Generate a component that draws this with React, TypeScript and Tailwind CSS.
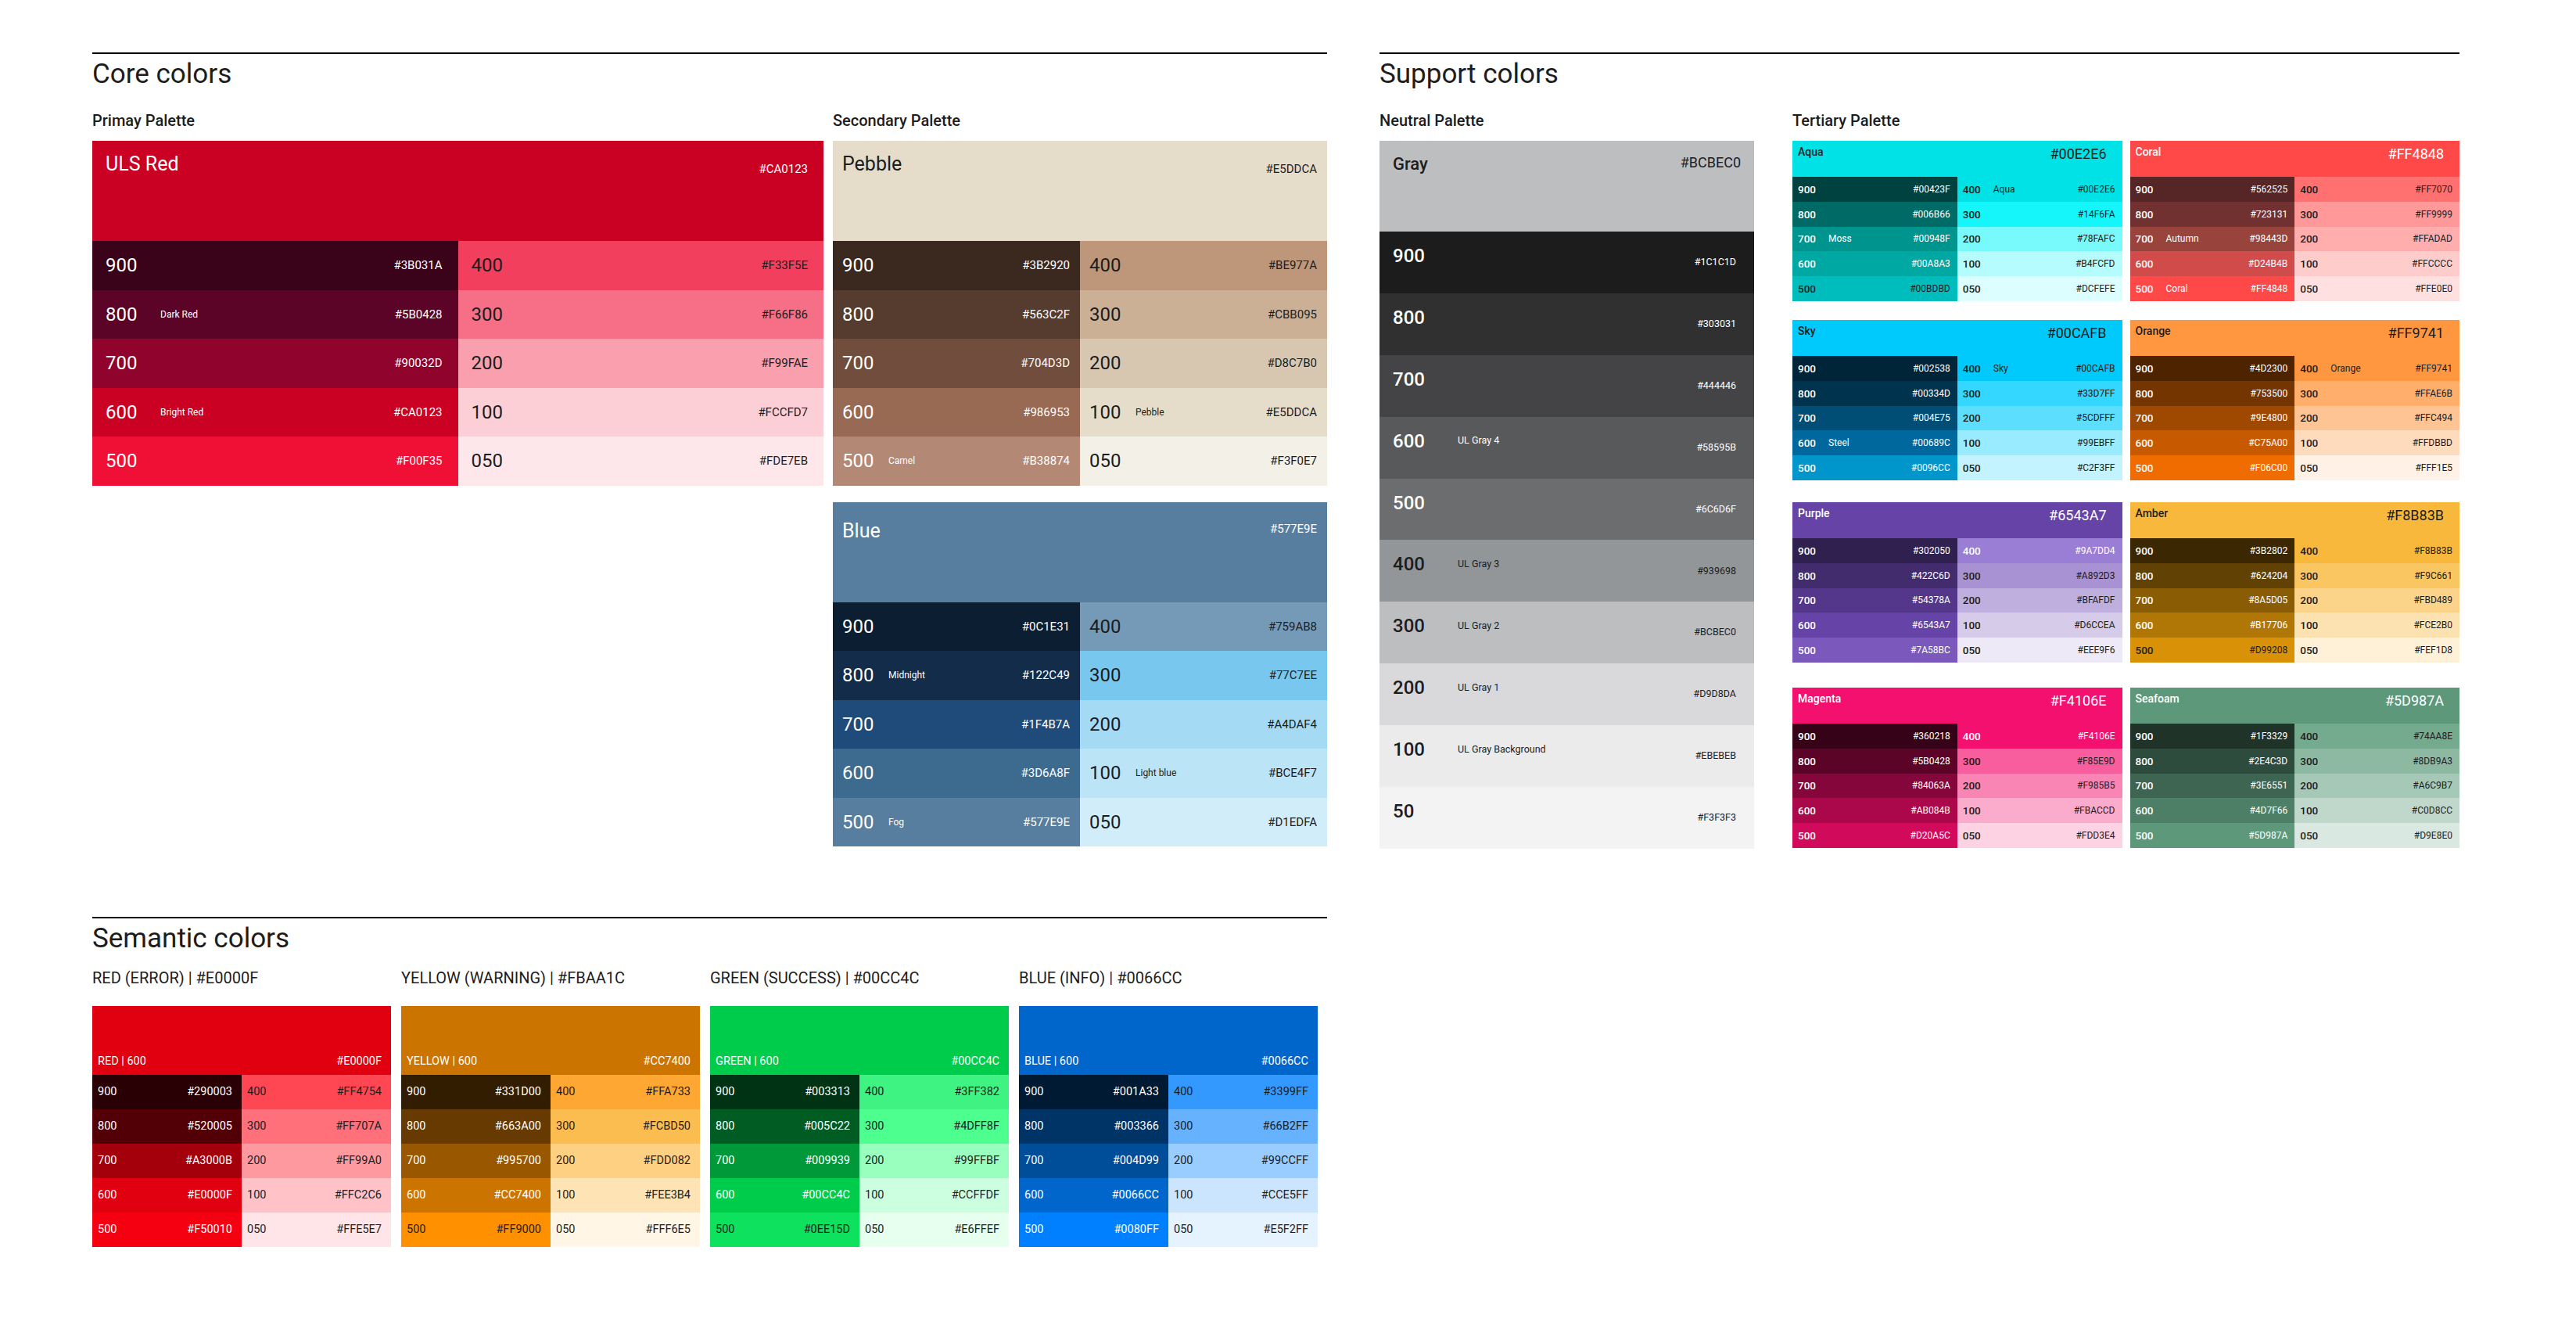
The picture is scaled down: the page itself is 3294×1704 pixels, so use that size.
import React from "react";

type Swatch = { n: string; hex: string; bg: string; name?: string; d?: boolean };
type Palette = {
  title: string;
  hex: string;
  bg: string;
  dark?: boolean;
  left: Swatch[];
  right: Swatch[];
};

const DARK = "text-[#1d1d1d]";
const LIGHT = "text-white";

// ---- Core ----
const PRIMARY: Palette = {
  title: "ULS Red", hex: "#CA0123", bg: "bg-[#CA0123]",
  left: [
    { n: "900", hex: "#3B031A", bg: "bg-[#3B031A]" },
    { n: "800", hex: "#5B0428", bg: "bg-[#5B0428]", name: "Dark Red" },
    { n: "700", hex: "#90032D", bg: "bg-[#90032D]" },
    { n: "600", hex: "#CA0123", bg: "bg-[#CA0123]", name: "Bright Red" },
    { n: "500", hex: "#F00F35", bg: "bg-[#F00F35]" },
  ],
  right: [
    { n: "400", hex: "#F33F5E", bg: "bg-[#F33F5E]" },
    { n: "300", hex: "#F66F86", bg: "bg-[#F66F86]" },
    { n: "200", hex: "#F99FAE", bg: "bg-[#F99FAE]" },
    { n: "100", hex: "#FCCFD7", bg: "bg-[#FCCFD7]" },
    { n: "050", hex: "#FDE7EB", bg: "bg-[#FDE7EB]" },
  ],
};

const PEBBLE: Palette = {
  title: "Pebble", hex: "#E5DDCA", bg: "bg-[#E5DDCA]", dark: true,
  left: [
    { n: "900", hex: "#3B2920", bg: "bg-[#3B2920]" },
    { n: "800", hex: "#563C2F", bg: "bg-[#563C2F]" },
    { n: "700", hex: "#704D3D", bg: "bg-[#704D3D]" },
    { n: "600", hex: "#986953", bg: "bg-[#986953]" },
    { n: "500", hex: "#B38874", bg: "bg-[#B38874]", name: "Camel" },
  ],
  right: [
    { n: "400", hex: "#BE977A", bg: "bg-[#BE977A]" },
    { n: "300", hex: "#CBB095", bg: "bg-[#CBB095]" },
    { n: "200", hex: "#D8C7B0", bg: "bg-[#D8C7B0]" },
    { n: "100", hex: "#E5DDCA", bg: "bg-[#E5DDCA]", name: "Pebble" },
    { n: "050", hex: "#F3F0E7", bg: "bg-[#F3F0E7]" },
  ],
};

const BLUE: Palette = {
  title: "Blue", hex: "#577E9E", bg: "bg-[#577E9E]",
  left: [
    { n: "900", hex: "#0C1E31", bg: "bg-[#0C1E31]" },
    { n: "800", hex: "#122C49", bg: "bg-[#122C49]", name: "Midnight" },
    { n: "700", hex: "#1F4B7A", bg: "bg-[#1F4B7A]" },
    { n: "600", hex: "#3D6A8F", bg: "bg-[#3D6A8F]" },
    { n: "500", hex: "#577E9E", bg: "bg-[#577E9E]", name: "Fog" },
  ],
  right: [
    { n: "400", hex: "#759AB8", bg: "bg-[#759AB8]" },
    { n: "300", hex: "#77C7EE", bg: "bg-[#77C7EE]" },
    { n: "200", hex: "#A4DAF4", bg: "bg-[#A4DAF4]" },
    { n: "100", hex: "#BCE4F7", bg: "bg-[#BCE4F7]", name: "Light blue" },
    { n: "050", hex: "#D1EDFA", bg: "bg-[#D1EDFA]" },
  ],
};

// ---- Neutral ----
const GRAYS: Swatch[] = [
  { n: "900", hex: "#1C1C1D", bg: "bg-[#1C1C1D]" },
  { n: "800", hex: "#303031", bg: "bg-[#303031]" },
  { n: "700", hex: "#444446", bg: "bg-[#444446]" },
  { n: "600", hex: "#58595B", bg: "bg-[#58595B]", name: "UL Gray 4" },
  { n: "500", hex: "#6C6D6F", bg: "bg-[#6C6D6F]" },
  { n: "400", hex: "#939698", bg: "bg-[#939698]", name: "UL Gray 3", d: true },
  { n: "300", hex: "#BCBEC0", bg: "bg-[#BCBEC0]", name: "UL Gray 2", d: true },
  { n: "200", hex: "#D9D8DA", bg: "bg-[#D9D8DA]", name: "UL Gray 1", d: true },
  { n: "100", hex: "#EBEBEB", bg: "bg-[#EBEBEB]", name: "UL Gray Background", d: true },
  { n: "50", hex: "#F3F3F3", bg: "bg-[#F3F3F3]", d: true },
];

// ---- Tertiary (pairs, one per row) ----
const TERTIARY: Palette[][] = [
  [
    {
      title: "Aqua", hex: "#00E2E6", bg: "bg-[#00E2E6]", dark: true,
      left: [
        { n: "900", hex: "#00423F", bg: "bg-[#00423F]" },
        { n: "800", hex: "#006B66", bg: "bg-[#006B66]" },
        { n: "700", hex: "#00948F", bg: "bg-[#00948F]", name: "Moss" },
        { n: "600", hex: "#00A8A3", bg: "bg-[#00A8A3]" },
        { n: "500", hex: "#00BDBD", bg: "bg-[#00BDBD]", d: true },
      ],
      right: [
        { n: "400", hex: "#00E2E6", bg: "bg-[#00E2E6]", name: "Aqua" },
        { n: "300", hex: "#14F6FA", bg: "bg-[#14F6FA]" },
        { n: "200", hex: "#78FAFC", bg: "bg-[#78FAFC]" },
        { n: "100", hex: "#B4FCFD", bg: "bg-[#B4FCFD]" },
        { n: "050", hex: "#DCFEFE", bg: "bg-[#DCFEFE]" },
      ],
    },
    {
      title: "Coral", hex: "#FF4848", bg: "bg-[#FF4848]",
      left: [
        { n: "900", hex: "#562525", bg: "bg-[#562525]" },
        { n: "800", hex: "#723131", bg: "bg-[#723131]" },
        { n: "700", hex: "#98443D", bg: "bg-[#98443D]", name: "Autumn" },
        { n: "600", hex: "#D24B4B", bg: "bg-[#D24B4B]" },
        { n: "500", hex: "#FF4848", bg: "bg-[#FF4848]", name: "Coral" },
      ],
      right: [
        { n: "400", hex: "#FF7070", bg: "bg-[#FF7070]" },
        { n: "300", hex: "#FF9999", bg: "bg-[#FF9999]" },
        { n: "200", hex: "#FFADAD", bg: "bg-[#FFADAD]" },
        { n: "100", hex: "#FFCCCC", bg: "bg-[#FFCCCC]" },
        { n: "050", hex: "#FFE0E0", bg: "bg-[#FFE0E0]" },
      ],
    },
  ],
  [
    {
      title: "Sky", hex: "#00CAFB", bg: "bg-[#00CAFB]", dark: true,
      left: [
        { n: "900", hex: "#002538", bg: "bg-[#002538]" },
        { n: "800", hex: "#00334D", bg: "bg-[#00334D]" },
        { n: "700", hex: "#004E75", bg: "bg-[#004E75]" },
        { n: "600", hex: "#00689C", bg: "bg-[#00689C]", name: "Steel" },
        { n: "500", hex: "#0096CC", bg: "bg-[#0096CC]" },
      ],
      right: [
        { n: "400", hex: "#00CAFB", bg: "bg-[#00CAFB]", name: "Sky" },
        { n: "300", hex: "#33D7FF", bg: "bg-[#33D7FF]" },
        { n: "200", hex: "#5CDFFF", bg: "bg-[#5CDFFF]" },
        { n: "100", hex: "#99EBFF", bg: "bg-[#99EBFF]" },
        { n: "050", hex: "#C2F3FF", bg: "bg-[#C2F3FF]" },
      ],
    },
    {
      title: "Orange", hex: "#FF9741", bg: "bg-[#FF9741]", dark: true,
      left: [
        { n: "900", hex: "#4D2300", bg: "bg-[#4D2300]" },
        { n: "800", hex: "#753500", bg: "bg-[#753500]" },
        { n: "700", hex: "#9E4800", bg: "bg-[#9E4800]" },
        { n: "600", hex: "#C75A00", bg: "bg-[#C75A00]" },
        { n: "500", hex: "#F06C00", bg: "bg-[#F06C00]" },
      ],
      right: [
        { n: "400", hex: "#FF9741", bg: "bg-[#FF9741]", name: "Orange" },
        { n: "300", hex: "#FFAE6B", bg: "bg-[#FFAE6B]" },
        { n: "200", hex: "#FFC494", bg: "bg-[#FFC494]" },
        { n: "100", hex: "#FFDBBD", bg: "bg-[#FFDBBD]" },
        { n: "050", hex: "#FFF1E5", bg: "bg-[#FFF1E5]" },
      ],
    },
  ],
  [
    {
      title: "Purple", hex: "#6543A7", bg: "bg-[#6543A7]",
      left: [
        { n: "900", hex: "#302050", bg: "bg-[#302050]" },
        { n: "800", hex: "#422C6D", bg: "bg-[#422C6D]" },
        { n: "700", hex: "#54378A", bg: "bg-[#54378A]" },
        { n: "600", hex: "#6543A7", bg: "bg-[#6543A7]" },
        { n: "500", hex: "#7A58BC", bg: "bg-[#7A58BC]" },
      ],
      right: [
        { n: "400", hex: "#9A7DD4", bg: "bg-[#9A7DD4]", d: false },
        { n: "300", hex: "#A892D3", bg: "bg-[#A892D3]" },
        { n: "200", hex: "#BFAFDF", bg: "bg-[#BFAFDF]" },
        { n: "100", hex: "#D6CCEA", bg: "bg-[#D6CCEA]" },
        { n: "050", hex: "#EEE9F6", bg: "bg-[#EEE9F6]" },
      ],
    },
    {
      title: "Amber", hex: "#F8B83B", bg: "bg-[#F8B83B]", dark: true,
      left: [
        { n: "900", hex: "#3B2802", bg: "bg-[#3B2802]" },
        { n: "800", hex: "#624204", bg: "bg-[#624204]" },
        { n: "700", hex: "#8A5D05", bg: "bg-[#8A5D05]" },
        { n: "600", hex: "#B17706", bg: "bg-[#B17706]" },
        { n: "500", hex: "#D99208", bg: "bg-[#D99208]", d: true },
      ],
      right: [
        { n: "400", hex: "#F8B83B", bg: "bg-[#F8B83B]" },
        { n: "300", hex: "#F9C661", bg: "bg-[#F9C661]" },
        { n: "200", hex: "#FBD489", bg: "bg-[#FBD489]" },
        { n: "100", hex: "#FCE2B0", bg: "bg-[#FCE2B0]" },
        { n: "050", hex: "#FEF1D8", bg: "bg-[#FEF1D8]" },
      ],
    },
  ],
  [
    {
      title: "Magenta", hex: "#F4106E", bg: "bg-[#F4106E]",
      left: [
        { n: "900", hex: "#360218", bg: "bg-[#360218]" },
        { n: "800", hex: "#5B0428", bg: "bg-[#5B0428]" },
        { n: "700", hex: "#84063A", bg: "bg-[#84063A]" },
        { n: "600", hex: "#AB084B", bg: "bg-[#AB084B]" },
        { n: "500", hex: "#D20A5C", bg: "bg-[#D20A5C]" },
      ],
      right: [
        { n: "400", hex: "#F4106E", bg: "bg-[#F4106E]", d: false },
        { n: "300", hex: "#F85E9D", bg: "bg-[#F85E9D]" },
        { n: "200", hex: "#F985B5", bg: "bg-[#F985B5]" },
        { n: "100", hex: "#FBACCD", bg: "bg-[#FBACCD]" },
        { n: "050", hex: "#FDD3E4", bg: "bg-[#FDD3E4]" },
      ],
    },
    {
      title: "Seafoam", hex: "#5D987A", bg: "bg-[#5D987A]",
      left: [
        { n: "900", hex: "#1F3329", bg: "bg-[#1F3329]" },
        { n: "800", hex: "#2E4C3D", bg: "bg-[#2E4C3D]" },
        { n: "700", hex: "#3E6551", bg: "bg-[#3E6551]" },
        { n: "600", hex: "#4D7F66", bg: "bg-[#4D7F66]" },
        { n: "500", hex: "#5D987A", bg: "bg-[#5D987A]" },
      ],
      right: [
        { n: "400", hex: "#74AA8E", bg: "bg-[#74AA8E]" },
        { n: "300", hex: "#8DB9A3", bg: "bg-[#8DB9A3]" },
        { n: "200", hex: "#A6C9B7", bg: "bg-[#A6C9B7]" },
        { n: "100", hex: "#C0D8CC", bg: "bg-[#C0D8CC]" },
        { n: "050", hex: "#D9E8E0", bg: "bg-[#D9E8E0]" },
      ],
    },
  ],
];

// spacing above each tertiary row, as measured
const TERT_GAPS = ["mt-[14px]", "mt-[24px]", "mt-[28px]", "mt-[32px]"];

// ---- Semantic ----
const SEMANTIC: (Palette & { label: string })[] = [
  {
    label: "RED (ERROR) | #E0000F", title: "RED | 600", hex: "#E0000F", bg: "bg-[#E0000F]",
    left: [
      { n: "900", hex: "#290003", bg: "bg-[#290003]" },
      { n: "800", hex: "#520005", bg: "bg-[#520005]" },
      { n: "700", hex: "#A3000B", bg: "bg-[#A3000B]" },
      { n: "600", hex: "#E0000F", bg: "bg-[#E0000F]" },
      { n: "500", hex: "#F50010", bg: "bg-[#F50010]" },
    ],
    right: [
      { n: "400", hex: "#FF4754", bg: "bg-[#FF4754]" },
      { n: "300", hex: "#FF707A", bg: "bg-[#FF707A]" },
      { n: "200", hex: "#FF99A0", bg: "bg-[#FF99A0]" },
      { n: "100", hex: "#FFC2C6", bg: "bg-[#FFC2C6]" },
      { n: "050", hex: "#FFE5E7", bg: "bg-[#FFE5E7]" },
    ],
  },
  {
    label: "YELLOW (WARNING) | #FBAA1C", title: "YELLOW | 600", hex: "#CC7400", bg: "bg-[#CC7400]",
    left: [
      { n: "900", hex: "#331D00", bg: "bg-[#331D00]" },
      { n: "800", hex: "#663A00", bg: "bg-[#663A00]" },
      { n: "700", hex: "#995700", bg: "bg-[#995700]" },
      { n: "600", hex: "#CC7400", bg: "bg-[#CC7400]" },
      { n: "500", hex: "#FF9000", bg: "bg-[#FF9000]", d: true },
    ],
    right: [
      { n: "400", hex: "#FFA733", bg: "bg-[#FFA733]" },
      { n: "300", hex: "#FCBD50", bg: "bg-[#FCBD50]" },
      { n: "200", hex: "#FDD082", bg: "bg-[#FDD082]" },
      { n: "100", hex: "#FEE3B4", bg: "bg-[#FEE3B4]" },
      { n: "050", hex: "#FFF6E5", bg: "bg-[#FFF6E5]" },
    ],
  },
  {
    label: "GREEN (SUCCESS) | #00CC4C", title: "GREEN | 600", hex: "#00CC4C", bg: "bg-[#00CC4C]",
    left: [
      { n: "900", hex: "#003313", bg: "bg-[#003313]" },
      { n: "800", hex: "#005C22", bg: "bg-[#005C22]" },
      { n: "700", hex: "#009939", bg: "bg-[#009939]" },
      { n: "600", hex: "#00CC4C", bg: "bg-[#00CC4C]" },
      { n: "500", hex: "#0EE15D", bg: "bg-[#0EE15D]", d: true },
    ],
    right: [
      { n: "400", hex: "#3FF382", bg: "bg-[#3FF382]" },
      { n: "300", hex: "#4DFF8F", bg: "bg-[#4DFF8F]" },
      { n: "200", hex: "#99FFBF", bg: "bg-[#99FFBF]" },
      { n: "100", hex: "#CCFFDF", bg: "bg-[#CCFFDF]" },
      { n: "050", hex: "#E6FFEF", bg: "bg-[#E6FFEF]" },
    ],
  },
  {
    label: "BLUE (INFO) | #0066CC", title: "BLUE | 600", hex: "#0066CC", bg: "bg-[#0066CC]",
    left: [
      { n: "900", hex: "#001A33", bg: "bg-[#001A33]" },
      { n: "800", hex: "#003366", bg: "bg-[#003366]" },
      { n: "700", hex: "#004D99", bg: "bg-[#004D99]" },
      { n: "600", hex: "#0066CC", bg: "bg-[#0066CC]" },
      { n: "500", hex: "#0080FF", bg: "bg-[#0080FF]" },
    ],
    right: [
      { n: "400", hex: "#3399FF", bg: "bg-[#3399FF]" },
      { n: "300", hex: "#66B2FF", bg: "bg-[#66B2FF]" },
      { n: "200", hex: "#99CCFF", bg: "bg-[#99CCFF]" },
      { n: "100", hex: "#CCE5FF", bg: "bg-[#CCE5FF]" },
      { n: "050", hex: "#E5F2FF", bg: "bg-[#E5F2FF]" },
    ],
  },
];

const tone = (s: Swatch, fallbackDark: boolean) => ((s.d ?? fallbackDark) ? DARK : LIGHT);

function SectionHead({ title }: { title: string }) {
  return (
    <>
      <div className="h-[2px] bg-black" />
      <h2 className="mt-[5px] text-[35px] leading-[42px] text-[#1d1d1d]">{title}</h2>
    </>
  );
}

function PaletteTitle({ children }: { children: React.ReactNode }) {
  return <h3 className="mt-[26px] text-[20px] leading-[24px] font-medium text-[#1d1d1d]">{children}</h3>;
}

type CoreLook = { pad: string; numW: string; headPt: string; hexMt: string };

function CoreBlock({ p, look }: { p: Palette; look: CoreLook }) {
  const col = (list: Swatch[], fallbackDark: boolean) => (
    <div>
      {list.map(s => (
        <div key={s.n} className={`${s.bg} ${tone(s, fallbackDark)} ${look.pad} h-[62.5px] flex items-center`}>
          <span className={`${look.numW} text-[24px] leading-[28px]`}>{s.n}</span>
          {s.name && <span className="text-[12px]">{s.name}</span>}
          <span className="ml-auto text-[15px] leading-[18px]">{s.hex}</span>
        </div>
      ))}
    </div>
  );
  return (
    <div>
      <div className={`${p.bg} ${p.dark ? DARK : LIGHT} ${look.pad} ${look.headPt} h-[128px] flex items-start justify-between`}>
        <span className="text-[25px] leading-[30px]">{p.title}</span>
        <span className={`${look.hexMt} text-[15px] leading-[18px]`}>{p.hex}</span>
      </div>
      <div className="grid grid-cols-2">
        {col(p.left, false)}
        {col(p.right, true)}
      </div>
    </div>
  );
}

function NeutralBlock() {
  return (
    <div>
      <div className={`bg-[#BCBEC0] ${DARK} h-[116px] flex items-start justify-between px-[17px] pt-[17px]`}>
        <span className="text-[22px] leading-[26px] font-medium">Gray</span>
        <span className="text-[18px] leading-[22px]">#BCBEC0</span>
      </div>
      {GRAYS.map(s => (
        <div key={s.n} className={`${s.bg} ${tone(s, false)} h-[78.9px] flex pl-[17px] pr-[23px]`}>
          <div className="flex items-center self-start pt-[17px]">
            <span className="w-[83px] text-[24px] leading-[28px] font-medium">{s.n}</span>
            {s.name && <span className="text-[12.5px]">{s.name}</span>}
          </div>
          <span className="ml-auto self-center text-[12.5px]">{s.hex}</span>
        </div>
      ))}
    </div>
  );
}

function TertiaryBlock({ p }: { p: Palette }) {
  const col = (list: Swatch[], fallbackDark: boolean) => (
    <div>
      {list.map(s => (
        <div key={s.n} className={`${s.bg} ${tone(s, fallbackDark)} h-[31.8px] flex items-center pl-[7px] pr-[9px]`}>
          <span className="w-[39px] text-[13.5px] font-medium">{s.n}</span>
          {s.name && <span className="text-[12px]">{s.name}</span>}
          <span className="ml-auto text-[12px]">{s.hex}</span>
        </div>
      ))}
    </div>
  );
  return (
    <div>
      <div className={`${p.bg} ${p.dark ? DARK : LIGHT} h-[46px] flex items-start justify-between pl-[7px] pr-[20px] pt-[6px]`}>
        <span className="text-[14px] leading-[17px] font-medium">{p.title}</span>
        <span className="text-[18px] leading-[21px]">{p.hex}</span>
      </div>
      <div className="grid grid-cols-2">
        {col(p.left, false)}
        {col(p.right, true)}
      </div>
    </div>
  );
}

function SemanticBlock({ p }: { p: Palette & { label: string } }) {
  const col = (list: Swatch[], fallbackDark: boolean) => (
    <div>
      {list.map(s => (
        <div key={s.n} className={`${s.bg} ${tone(s, fallbackDark)} h-[44px] flex items-center justify-between pl-[7px] pr-[12px] text-[14.5px]`}>
          <span>{s.n}</span>
          <span>{s.hex}</span>
        </div>
      ))}
    </div>
  );
  return (
    <div className="w-[382px]">
      <h3 className="text-[20px] leading-[24px] text-[#1d1d1d]">{p.label}</h3>
      <div className="mt-[24px]">
        <div className={`${p.bg} text-white h-[88px] flex items-end justify-between pl-[7px] pr-[12px] pb-[9px] text-[14.5px] leading-[17px]`}>
          <span>{p.title}</span>
          <span>{p.hex}</span>
        </div>
        <div className="grid grid-cols-2">
          {col(p.left, false)}
          {col(p.right, true)}
        </div>
      </div>
    </div>
  );
}

const WIDE: CoreLook = { pad: "pl-[17px] pr-[20px]", numW: "w-[70px]", headPt: "pt-[15px]", hexMt: "mt-[12px]" };
const NARROW: CoreLook = { pad: "pl-[12px] pr-[13px]", numW: "w-[59px]", headPt: "pt-[15px]", hexMt: "mt-[12px]" };
const NARROW_LOW: CoreLook = { pad: "pl-[12px] pr-[13px]", numW: "w-[59px]", headPt: "pt-[22px]", hexMt: "mt-[3px]" };

export default function App() {
  return (
    <div className="min-h-screen bg-white font-[Roboto,sans-serif] pt-[67px] pl-[118px]">
      <div className="flex gap-[67px]">
        {/* Core colors */}
        <section className="w-[1579px]">
          <SectionHead title="Core colors" />
          <div className="flex gap-[12px]">
            <div className="w-[935px]">
              <PaletteTitle>Primay Palette</PaletteTitle>
              <div className="mt-[14px]">
                <CoreBlock p={PRIMARY} look={WIDE} />
              </div>
            </div>
            <div className="w-[632px]">
              <PaletteTitle>Secondary Palette</PaletteTitle>
              <div className="mt-[14px]">
                <CoreBlock p={PEBBLE} look={NARROW} />
              </div>
              <div className="mt-[21px]">
                <CoreBlock p={BLUE} look={NARROW_LOW} />
              </div>
            </div>
          </div>
        </section>

        {/* Support colors */}
        <section className="w-[1381px]">
          <SectionHead title="Support colors" />
          <div className="flex gap-[49px]">
            <div className="w-[479px]">
              <PaletteTitle>Neutral Palette</PaletteTitle>
              <div className="mt-[14px]">
                <NeutralBlock />
              </div>
            </div>
            <div className="w-[853px]">
              <PaletteTitle>Tertiary Palette</PaletteTitle>
              {TERTIARY.map((pair, i) => (
                <div key={pair[0].title} className={`${TERT_GAPS[i]} grid grid-cols-2 gap-x-[10px]`}>
                  {pair.map(p => <TertiaryBlock key={p.title} p={p} />)}
                </div>
              ))}
            </div>
          </div>
        </section>
      </div>

      {/* Semantic colors */}
      <section className="w-[1579px] mt-[87px]">
        <SectionHead title="Semantic colors" />
        <div className="mt-[17px] flex gap-[13px]">
          {SEMANTIC.map(p => <SemanticBlock key={p.label} p={p} />)}
        </div>
      </section>
    </div>
  );
}
